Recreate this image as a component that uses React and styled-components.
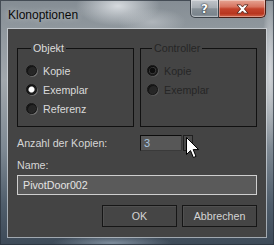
import React from 'react';
import styled, { createGlobalStyle } from 'styled-components';

const Global = createGlobalStyle`
  html, body { margin: 0; padding: 0; background: #5f6a75; }
  body { width: 274px; height: 245px; overflow: hidden; }
  * { box-sizing: border-box; }
`;

const Window = styled.div`
  position: relative;
  width: 274px;
  height: 245px;
  display: flex;
  flex-direction: column;
  padding: 0 8px 8px;
  background:
    radial-gradient(ellipse 42px 20px at 118px 6px, rgba(218,222,226,0.95), rgba(218,222,226,0)),
    radial-gradient(ellipse 34px 14px at 152px 22px, rgba(190,195,200,0.7), rgba(190,195,200,0)),
    radial-gradient(ellipse 60px 8px at 112px 243px, rgba(140,156,172,0.8), rgba(140,156,172,0)),
    radial-gradient(ellipse 8px 80px at 270px 70px, rgba(215,218,222,0.9), rgba(215,218,222,0)),
    linear-gradient(180deg, #858d94 0px, #8f979d 28px, #a2a8ad 80px, #7d8892 150px, #4f5d6b 205px, #3d4a58 245px);
  box-shadow: inset 0 0 0 1px rgba(40, 48, 58, 0.7);
`;

const TitleBar = styled.div`
  height: 29px;
  margin: 0 -8px;
  display: flex;
  align-items: flex-start;
`;

const Title = styled.span`
  margin: 8px 0 0 8px;
  font-family: "Liberation Sans", Arial, sans-serif;
  font-size: 12px;
  line-height: 14px;
  color: #0a0a0a;
  text-shadow: 0 0 6px rgba(255, 255, 255, 0.55);
`;

const CaptionButtons = styled.div`
  margin-left: auto;
  margin-right: 8px;
  display: flex;
`;

const CaptionButton = styled.div`
  width: ${p => p.$w}px;
  height: 18px;
  display: flex;
  align-items: center;
  justify-content: center;
  border: 1px solid ${p => (p.$close ? '#4a1d14' : '#3b4249')};
  border-top: none;
  border-radius: ${p => (p.$close ? '0 0 5px 0' : '0 0 0 5px')};
  border-left: ${p => (p.$close ? 'none' : undefined)};
  background: ${p =>
    p.$close
      ? 'linear-gradient(180deg, #e6a594 0%, #d7735f 40%, #c3432c 52%, #b8361f 80%, #d0644a 100%)'
      : 'linear-gradient(180deg, #c1c6cb 0%, #a6adb3 45%, #879097 52%, #7b858d 85%, #959ea5 100%)'};
  box-shadow: inset 0 0 0 1px rgba(255, 255, 255, 0.35);
  font-family: "DejaVu Sans", sans-serif;
  font-weight: bold;
  font-size: 12px;
  color: #fff;
  text-shadow: 0 0 2px #1d2328, 0 0 1px #1d2328;
`;

const Client = styled.div`
  flex: 1;
  display: flex;
  flex-direction: column;
  padding: 13px 9px 0;
  background: #444444;
  box-shadow: 0 0 0 1px rgba(226, 230, 234, 0.6);
  font-family: "Liberation Sans", Arial, sans-serif;
  font-size: 10.7px;
  color: #d8d8d8;
`;

const Columns = styled.div`
  display: grid;
  grid-template-columns: 117px 117px;
  column-gap: 6px;
  align-items: center;
`;

const Group = styled.fieldset`
  margin: 0;
  min-width: 0;
  height: 85px;
  border: 1px solid #111111;
  padding: 6px 0 0 ${p => p.$indent}px;
  display: flex;
  flex-direction: column;
`;

const Legend = styled.legend`
  margin-left: 5px;
  padding: 0 2px;
  line-height: 13px;
  color: ${p => (p.$disabled ? '#262626' : '#dcdcdc')};
`;

const RadioRow = styled.div`
  height: 19px;
  display: flex;
  align-items: center;
  gap: 6px;
  color: ${p => (p.$disabled ? '#262626' : '#dadada')};
`;

const RadioCircle = styled.span`
  width: 11px;
  height: 11px;
  border-radius: 50%;
  flex: none;
  background: ${p => {
    if (p.$checked && !p.$disabled)
      return 'radial-gradient(circle at 50% 50%, #ffffff 0 2.2px, #b8b8b8 2.8px, #1f1f1f 3.6px, #2a2a2a 100%)';
    if (p.$checked)
      return 'radial-gradient(circle at 50% 50%, #0e0e0e 0 2.4px, #3a3a3a 3.2px, #1c1c1c 4px, #262626 100%)';
    return 'radial-gradient(circle at 45% 45%, #262626 0 3px, #2c2c2c 100%)';
  }};
  border: 1px solid #141414;
  box-shadow: 1px 1px 0 -0.2px ${p => (p.$disabled ? '#5a5a5a' : '#737373')}, inset 1px 1px 0 rgba(0,0,0,0.5);
`;

const Radio = ({ label, checked, disabled }) => (
  <RadioRow $disabled={disabled}>
    <RadioCircle $checked={checked} $disabled={disabled} />
    <span>{label}</span>
  </RadioRow>
);

const CountRow = styled(Columns)`
  margin-top: 8px;
  height: 16px;
`;

const Label = styled.span`
  line-height: 13px;
  color: #d6d6d6;
`;

const SpinField = styled.div`
  display: flex;
  gap: 1px;
  height: 16px;
`;

const SpinInput = styled.div`
  width: 42px;
  height: 16px;
  padding-left: 3px;
  display: flex;
  align-items: center;
  background: #575757;
  border-top: 1px solid #0c0c0c;
  border-left: 1px solid #0c0c0c;
  border-right: 1px solid #3a3a3a;
  border-bottom: 1px solid #3a3a3a;
  color: #a9c4de;
  font-size: 11px;
`;

const SpinButtons = styled.div`
  width: 10px;
  height: 16px;
  display: flex;
  flex-direction: column;
  justify-content: space-around;
  align-items: center;
  background: #4b4b4b;
  border: 1px solid #202020;
`;

const Arrow = styled.span`
  width: 0;
  height: 0;
  border-left: 2.5px solid transparent;
  border-right: 2.5px solid transparent;
  ${p => (p.$down ? 'border-top' : 'border-bottom')}: 3px solid #bdbdbd;
`;

const NameLabel = styled(Label)`
  margin-top: 8px;
`;

const NameInput = styled.div`
  margin-top: 3px;
  height: 20px;
  padding-left: 5px;
  display: flex;
  align-items: center;
  background: #5a5a5a;
  border: 1px solid #cfcfcf;
  color: #e4e4e4;
  font-size: 10.7px;
`;

const ButtonRow = styled.div`
  margin-top: 10px;
  display: flex;
  justify-content: flex-end;
  gap: 5px;
`;

const Button = styled.div`
  width: 75px;
  height: 22px;
  display: flex;
  align-items: center;
  justify-content: center;
  background: #454545;
  border: 1px solid #161616;
  box-shadow: inset 1px 1px 0 #505050;
  color: #d4d4d4;
`;

const Cursor = styled.svg`
  position: absolute;
  left: 186px;
  top: 137px;
`;

export default function App() {
  return (
    <>
      <Global />
      <Window>
        <TitleBar>
          <Title>Klonoptionen</Title>
          <CaptionButtons>
            <CaptionButton $w={29}>?</CaptionButton>
            <CaptionButton $w={47} $close>
              <svg width="13" height="10" viewBox="0 0 13 10">
                <path
                  d="M1 0.8 H4.6 L6.5 3 L8.4 0.8 H12 L8.4 5 L12 9.2 H8.4 L6.5 7 L4.6 9.2 H1 L4.6 5 Z"
                  fill="#ffffff"
                  stroke="#4a1a10"
                  strokeWidth="0.8"
                  strokeLinejoin="round"
                />
              </svg>
            </CaptionButton>
          </CaptionButtons>
        </TitleBar>
        <Client>
          <Columns>
            <Group $indent={8}>
              <Legend>Objekt</Legend>
              <Radio label="Kopie" />
              <Radio label="Exemplar" checked />
              <Radio label="Referenz" />
            </Group>
            <Group $indent={6}>
              <Legend $disabled>Controller</Legend>
              <Radio label="Kopie" checked disabled />
              <Radio label="Exemplar" disabled />
            </Group>
          </Columns>
          <CountRow>
            <Label>Anzahl der Kopien:</Label>
            <SpinField>
              <SpinInput>3</SpinInput>
              <SpinButtons>
                <Arrow />
                <Arrow $down />
              </SpinButtons>
            </SpinField>
          </CountRow>
          <NameLabel>Name:</NameLabel>
          <NameInput>PivotDoor002</NameInput>
          <ButtonRow>
            <Button>OK</Button>
            <Button>Abbrechen</Button>
          </ButtonRow>
        </Client>
        <Cursor width="14" height="22" viewBox="0 0 14 22">
          <path
            d="M0.5 0.5 V17.5 L4.5 13.6 L7.4 20.5 L10 19.4 L7.2 12.6 H12.6 Z"
            fill="#ffffff"
            stroke="#000000"
            strokeWidth="1"
            strokeLinejoin="miter"
          />
        </Cursor>
      </Window>
    </>
  );
}
